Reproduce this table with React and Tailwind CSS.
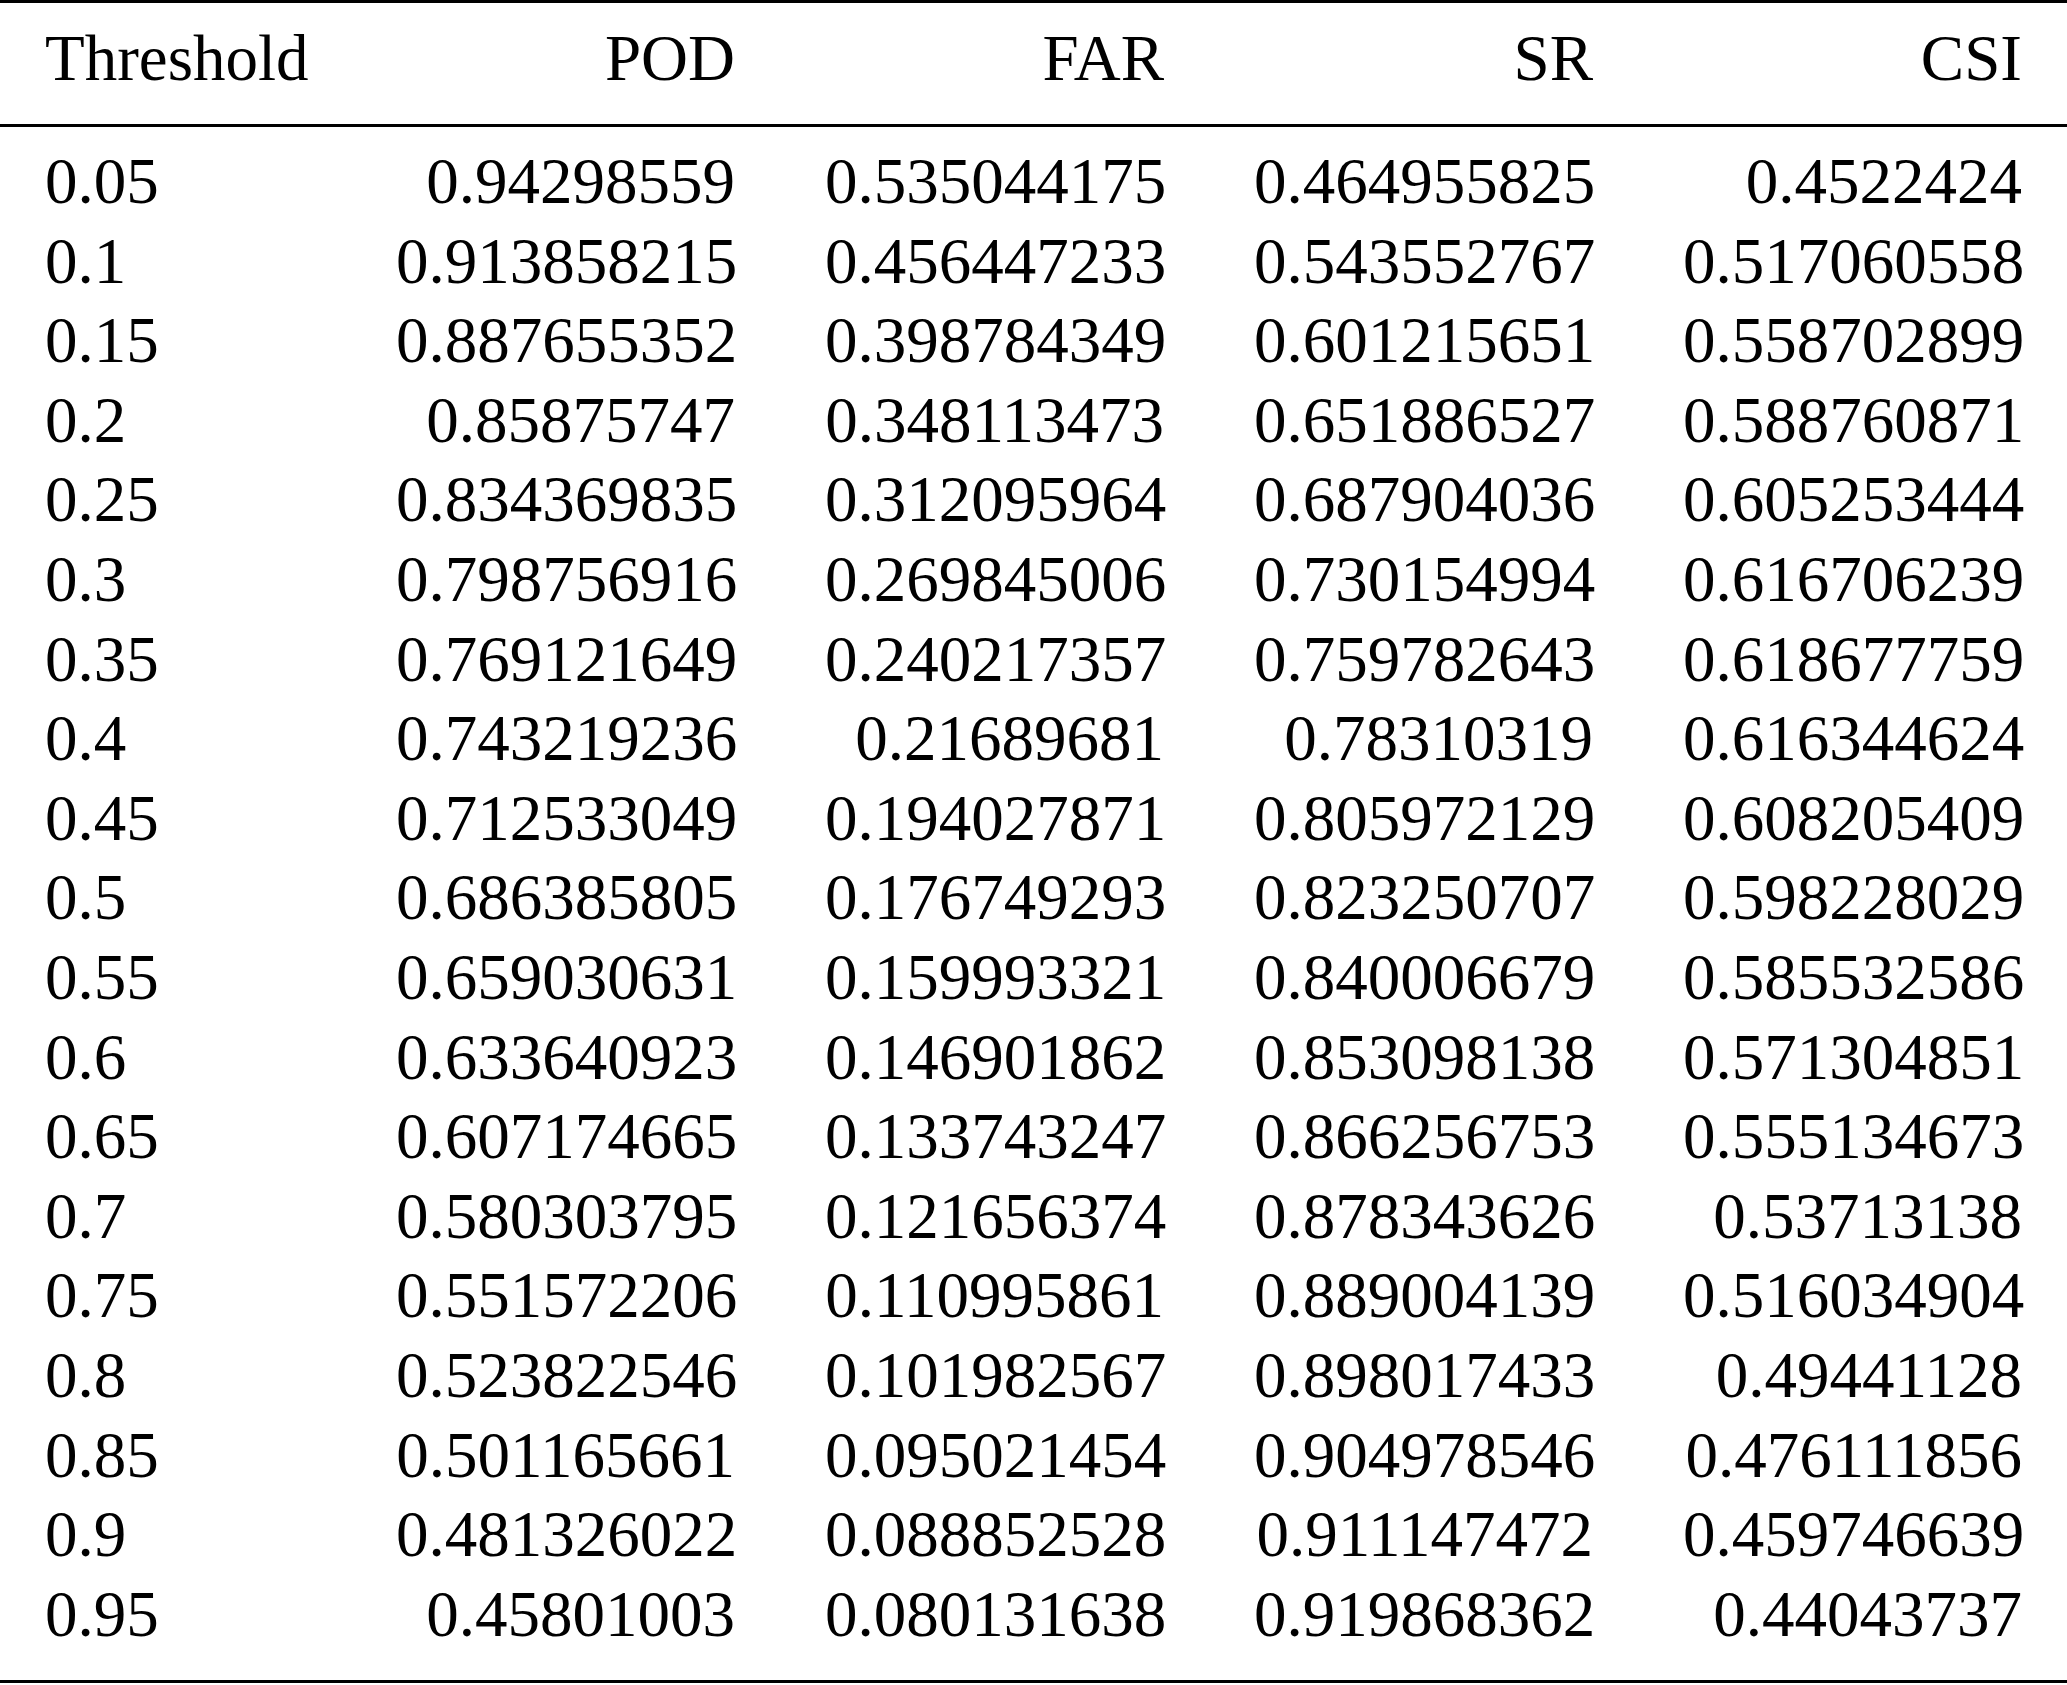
import React from "react";

const rows = [
  ["0.05", "0.94298559", "0.535044175", "0.464955825", "0.4522424"],
  ["0.1", "0.913858215", "0.456447233", "0.543552767", "0.517060558"],
  ["0.15", "0.887655352", "0.398784349", "0.601215651", "0.558702899"],
  ["0.2", "0.85875747", "0.348113473", "0.651886527", "0.588760871"],
  ["0.25", "0.834369835", "0.312095964", "0.687904036", "0.605253444"],
  ["0.3", "0.798756916", "0.269845006", "0.730154994", "0.616706239"],
  ["0.35", "0.769121649", "0.240217357", "0.759782643", "0.618677759"],
  ["0.4", "0.743219236", "0.21689681", "0.78310319", "0.616344624"],
  ["0.45", "0.712533049", "0.194027871", "0.805972129", "0.608205409"],
  ["0.5", "0.686385805", "0.176749293", "0.823250707", "0.598228029"],
  ["0.55", "0.659030631", "0.159993321", "0.840006679", "0.585532586"],
  ["0.6", "0.633640923", "0.146901862", "0.853098138", "0.571304851"],
  ["0.65", "0.607174665", "0.133743247", "0.866256753", "0.555134673"],
  ["0.7", "0.580303795", "0.121656374", "0.878343626", "0.53713138"],
  ["0.75", "0.551572206", "0.110995861", "0.889004139", "0.516034904"],
  ["0.8", "0.523822546", "0.101982567", "0.898017433", "0.49441128"],
  ["0.85", "0.501165661", "0.095021454", "0.904978546", "0.476111856"],
  ["0.9", "0.481326022", "0.088852528", "0.911147472", "0.459746639"],
  ["0.95", "0.45801003", "0.080131638", "0.919868362", "0.44043737"],
];

const headers = ["Threshold", "POD", "FAR", "SR", "CSI"];

function Row({ cells, lh }) {
  return (
    <div className={`grid grid-cols-[351px_429px_429px_429px_429px] ${lh}`}>
      {cells.map((c, i) => (
        <div key={i} className={`px-[45px] whitespace-nowrap ${i === 0 ? "text-left" : "text-right"}`}>
          {c}
        </div>
      ))}
    </div>
  );
}

export default function App() {
  return (
    <div className="w-[2067px] h-[1685px] bg-white text-black text-[65px] font-['Liberation_Serif',serif]">
      <div className="border-t-[3px] border-b-[3px] border-black pt-[15px] pb-[26px]">
        <Row cells={headers} lh="leading-[80px]" />
      </div>
      <div className="border-b-[3px] border-black pt-[15px] pb-[25.6px]">
        {rows.map((r, i) => (
          <Row key={i} cells={r} lh="leading-[79.6px]" />
        ))}
      </div>
    </div>
  );
}
